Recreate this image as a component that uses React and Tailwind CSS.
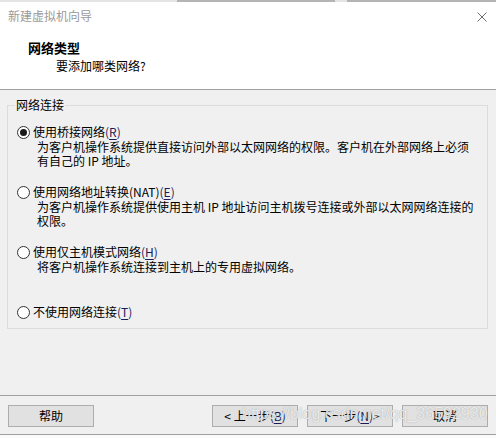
import React from 'react';

const FONT = { fontFamily: '"Noto Sans CJK SC", "Microsoft YaHei", sans-serif' };

const Key = ({ k }) => (
  <span className="text-[#1c1c5a]">
    (<span className="underline underline-offset-2">{k}</span>)
  </span>
);

const Radio = ({ checked }) => (
  <span className="w-[13px] h-[13px] rounded-full border border-[#333] bg-white flex items-center justify-center shrink-0">
    {checked && <span className="w-[7px] h-[7px] rounded-full bg-[#1a1a1a]" />}
  </span>
);

const Option = ({ label, k, checked, lines = [] }) => (
  <div className="h-[60px]">
    <div className="flex items-center gap-[3px] h-4 pl-[9px]">
      <Radio checked={checked} />
      <span className="leading-4">
        {label}
        <Key k={k} />
      </span>
    </div>
    <div className="pl-[29px] leading-[14px]">
      {lines.map((l) => (
        <div key={l}>{l}</div>
      ))}
    </div>
  </div>
);

const Btn = ({ children, className = '' }) => (
  <button
    className={`h-[22px] w-[86px] border border-[#adadad] bg-[#e1e1e1] text-[12px] text-black flex items-center justify-center ${className}`}
  >
    {children}
  </button>
);

export default function App() {
  return (
    <div
      className="relative w-[496px] h-[439px] bg-[#f0f0f0] text-black text-[12px] flex flex-col overflow-hidden"
      style={FONT}
    >
      {/* header */}
      <div className="bg-white h-[90px] border-b border-[#a0a0a0] flex flex-col">
        <div className="flex h-[2px]">
          <div className="w-[177px] bg-[#e4e4e4]" />
          <div className="w-[158px] bg-[#b4b4b4]" />
          <div className="w-[12px] bg-[#e4e4e4]" />
          <div className="flex-1 bg-[#b4b4b4]" />
        </div>
        <div className="flex items-center justify-between h-[28px] pl-2 pr-[9px]">
          <span className="text-[#9a9a9a] text-[12px]">新建虚拟机向导</span>
          <svg width="10" height="10" viewBox="0 0 10 10" className="mt-[2px]">
            <path d="M0.5 0.5 L9.5 9.5 M9.5 0.5 L0.5 9.5" stroke="#6e6e6e" strokeWidth="1" />
          </svg>
        </div>
        <div className="pl-[28px] pt-[10px] font-bold text-[13px] leading-4">网络类型</div>
        <div className="pl-[56px] pt-[2px] leading-4">要添加哪类网络?</div>
      </div>

      {/* group box */}
      <div className="px-[7px] pt-[15px]">
        <div className="relative border border-[#dcdcdc] h-[224px] w-[481px]">
          <span className="absolute left-[7px] top-[-9px] bg-[#f0f0f0] px-[1px] leading-4">网络连接</span>
          <div className="pt-[18px]">
            <Option
              label="使用桥接网络"
              k="R"
              checked
              lines={[
                '为客户机操作系统提供直接访问外部以太网网络的权限。客户机在外部网络上必须',
                '有自己的 IP 地址。',
              ]}
            />
            <Option
              label="使用网络地址转换(NAT)"
              k="E"
              lines={[
                '为客户机操作系统提供使用主机 IP 地址访问主机拨号连接或外部以太网网络连接的',
                '权限。',
              ]}
            />
            <Option label="使用仅主机模式网络" k="H" lines={['将客户机操作系统连接到主机上的专用虚拟网络。']} />
            <Option label="不使用网络连接" k="T" />
          </div>
        </div>
      </div>

      {/* footer */}
      <div className="mt-[66px] border-t border-[#a0a0a0] h-[40px] flex items-center px-2 pt-[1px] border-b">
        <Btn>帮助</Btn>
        <div className="flex-1" />
        <Btn>
          &lt; 上一步<Key k="B" />
        </Btn>
        <Btn className="ml-[9px]">
          下一步<Key k="N" /> &gt;
        </Btn>
        <Btn className="ml-[9px]">取消</Btn>
      </div>
      <div className="flex-1 bg-gradient-to-b from-[#f8f8f8] to-white" />

      {/* watermark */}
      <span
        className="absolute left-[242px] top-[403px] text-[16px] leading-[22px] text-white/80 pointer-events-none"
        style={{ fontFamily: '"Liberation Sans", Arial, sans-serif', textShadow: '0 0 1px rgba(120,120,120,0.8)' }}
      >
        https://blog.csdn.net/qq_36592930
      </span>
    </div>
  );
}
